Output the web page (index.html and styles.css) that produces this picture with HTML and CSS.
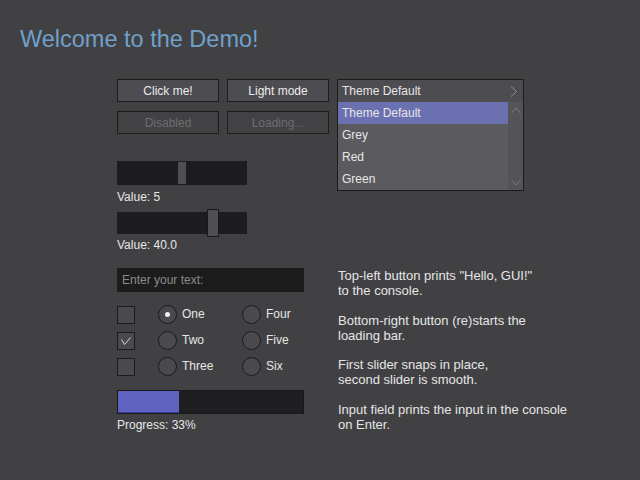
FILE: index.html
```html
<!DOCTYPE html>
<html lang="en">
<head>
<meta charset="utf-8">
<title>Demo</title>
<link rel="stylesheet" href="styles.css">
</head>
<body>
<header class="header">
  <h1 class="title">Welcome to the Demo!</h1>
</header>
<main class="layout">
  <section class="controls">
    <div class="buttons">
      <button class="btn">Click me!</button>
      <button class="btn">Light mode</button>
      <button class="btn" disabled>Disabled</button>
      <button class="btn" disabled>Loading...</button>
    </div>
    <div class="slider slider-snap">
      <div class="track"><div class="thumb" style="left:61px"></div></div>
    </div>
    <div class="value value-1">Value: 5</div>
    <div class="slider slider-smooth">
      <div class="track"></div>
      <div class="thumb" style="left:90px"></div>
    </div>
    <div class="value value-2">Value: 40.0</div>
  </section>

  <section class="dropdown">
    <div class="dd-head">
      <span>Theme Default</span>
      <svg class="chev" width="8" height="11" viewBox="0 0 8 11"><path d="M1 0.5 L6.5 5.5 L1 10.5" fill="none" stroke="#8e8e90" stroke-width="1"/></svg>
    </div>
    <div class="dd-body">
      <ul class="dd-list">
        <li class="dd-item selected">Theme Default</li>
        <li class="dd-item">Grey</li>
        <li class="dd-item">Red</li>
        <li class="dd-item">Green</li>
      </ul>
      <div class="scrollbar">
        <svg width="10" height="7" viewBox="0 0 10 7"><path d="M0.5 6 L5 1 L9.5 6" fill="none" stroke="#7d7c80" stroke-width="1"/></svg>
        <svg width="10" height="7" viewBox="0 0 10 7"><path d="M0.5 1 L5 6 L9.5 1" fill="none" stroke="#7d7c80" stroke-width="1"/></svg>
      </div>
    </div>
  </section>

  <section class="form">
    <input class="text-input" type="text" placeholder="Enter your text:">
    <div class="choices">
      <span class="checkbox"></span>
      <label class="radio"><span class="circle on"></span>One</label>
      <label class="radio"><span class="circle"></span>Four</label>

      <span class="checkbox checked">
        <svg width="18" height="18" viewBox="0 0 18 18"><path d="M4.5 7.5 L7.5 12.5 L13.5 5.5" fill="none" stroke="#d8d8d8" stroke-width="1"/></svg>
      </span>
      <label class="radio"><span class="circle"></span>Two</label>
      <label class="radio"><span class="circle"></span>Five</label>

      <span class="checkbox"></span>
      <label class="radio"><span class="circle"></span>Three</label>
      <label class="radio"><span class="circle"></span>Six</label>
    </div>
    <div class="progress"><div class="fill" style="width:33%"></div></div>
    <div class="value value-3">Progress: 33%</div>
  </section>

  <section class="help">
    <p>Top-left button prints "Hello, GUI!"<br>to the console.</p>
    <p>Bottom-right button (re)starts the<br>loading bar.</p>
    <p>First slider snaps in place,<br>second slider is smooth.</p>
    <p>Input field prints the input in the console<br>on Enter.</p>
  </section>
</main>
</body>
</html>
```

FILE: styles.css
```css
* { box-sizing: border-box; }

html, body {
  margin: 0;
  padding: 0;
  background: #414144;
  color: #e6e6e6;
  font-family: "Liberation Sans", Arial, sans-serif;
  font-size: 12px;
  width: 640px;
  height: 480px;
  overflow: hidden;
}

.header {
  padding: 25px 0 0 20px;
}

.title {
  margin: 0;
  font-size: 23.5px;
  line-height: 28px;
  font-weight: normal;
  color: #70a0ca;
}

.layout {
  display: grid;
  grid-template-columns: 187px 187px;
  column-gap: 33px;
  row-gap: 16px;
  margin: 26px 0 0 117px;
}

/* Buttons */
.buttons {
  display: grid;
  grid-template-columns: 102px 102px;
  grid-auto-rows: 23px;
  column-gap: 8px;
  row-gap: 9px;
}

.btn {
  margin: 0;
  padding: 1px 0 0;
  border: 1px solid #1c1c1d;
  background: #4d4c51;
  color: #ebebeb;
  font-family: "Liberation Sans", Arial, sans-serif;
  font-size: 12px;
  line-height: 20px;
}

.btn:disabled {
  background: #424245;
  color: #6e6e70;
}

/* Sliders */
.slider {
  position: relative;
  width: 130px;
}

.slider-snap {
  margin-top: 27px;
}

.slider-snap .track {
  position: relative;
  height: 24px;
  background: #1d1d1f;
}

.slider-snap .thumb {
  position: absolute;
  top: 1px;
  width: 8px;
  height: 22px;
  background: #4f4e53;
}

.slider-smooth {
  margin-top: 5px;
  height: 28px;
  padding-top: 3px;
}

.slider-smooth .track {
  height: 22px;
  background: #1d1d1f;
}

.slider-smooth .thumb {
  position: absolute;
  top: 0;
  width: 12px;
  height: 28px;
  background: #4f4e53;
  border: 1px solid #19191a;
}

.value {
  line-height: 14px;
  color: #e6e6e6;
}

.value-1 { margin-top: 5px; }
.value-2 { margin-top: 1px; }
.value-3 { margin-top: 4px; }

/* Dropdown */
.dropdown {
  align-self: start;
  border: 1px solid #1c1c1d;
  background: #5a595e;
}

.dd-head {
  display: flex;
  align-items: center;
  justify-content: space-between;
  height: 22px;
  padding: 0 4px 0 4px;
  background: #4d4c51;
}

.dd-head .chev {
  margin-right: 1px;
}

.dd-body {
  display: flex;
}

.dd-list {
  list-style: none;
  margin: 0;
  padding: 0;
  flex: 1;
}

.dd-item {
  height: 22px;
  line-height: 22px;
  padding-left: 4px;
  background: #5b5a5f;
}

.dd-item.selected {
  background: #6b70b1;
}

.scrollbar {
  width: 15px;
  display: flex;
  flex-direction: column;
  justify-content: space-between;
  align-items: center;
  padding: 5px 0 4px;
  background: #545358;
}

/* Form */
.text-input {
  display: block;
  width: 187px;
  height: 24px;
  margin: 0;
  padding: 0 5px;
  border: none;
  background: #1c1c1d;
  color: #e6e6e6;
  font-family: "Liberation Sans", Arial, sans-serif;
  font-size: 12px;
  outline: none;
}

.text-input::placeholder {
  color: #8a8a8c;
}

.choices {
  display: grid;
  grid-template-columns: 41px 84px 1fr;
  grid-auto-rows: 18px;
  row-gap: 8px;
  margin-top: 14px;
}

.checkbox {
  display: block;
  width: 18px;
  height: 18px;
  border: 1px solid #1c1c1d;
  background: #4a494e;
}

.checkbox svg {
  display: block;
  margin: -1px 0 0 -1px;
}

.radio {
  display: flex;
  align-items: center;
  gap: 5px;
  line-height: 16px;
  padding-bottom: 2px;
  color: #e6e6e6;
}

.circle {
  position: relative;
  width: 19px;
  height: 19px;
  margin-top: 1px;
  border-radius: 50%;
  border: 1px solid #1c1c1d;
  background: #4a494e;
  flex: none;
}

.circle.on::after {
  content: "";
  position: absolute;
  left: 6px;
  top: 6px;
  width: 5px;
  height: 5px;
  border-radius: 50%;
  background: #f2f2f2;
}

.progress {
  margin-top: 14px;
  width: 187px;
  height: 24px;
  border: 1px solid #18181a;
  background: #1f1f22;
}

.fill {
  height: 100%;
  background: #5f62bf;
  box-shadow: inset 0 -1px 0 #3e41a0;
}

/* Help */
.help {
  padding: 0 0 0 1px;
  font-size: 13px;
  line-height: 15px;
  color: #e6e6e6;
  white-space: nowrap;
}

.help p {
  margin: 0 0 14.5px;
}
```
